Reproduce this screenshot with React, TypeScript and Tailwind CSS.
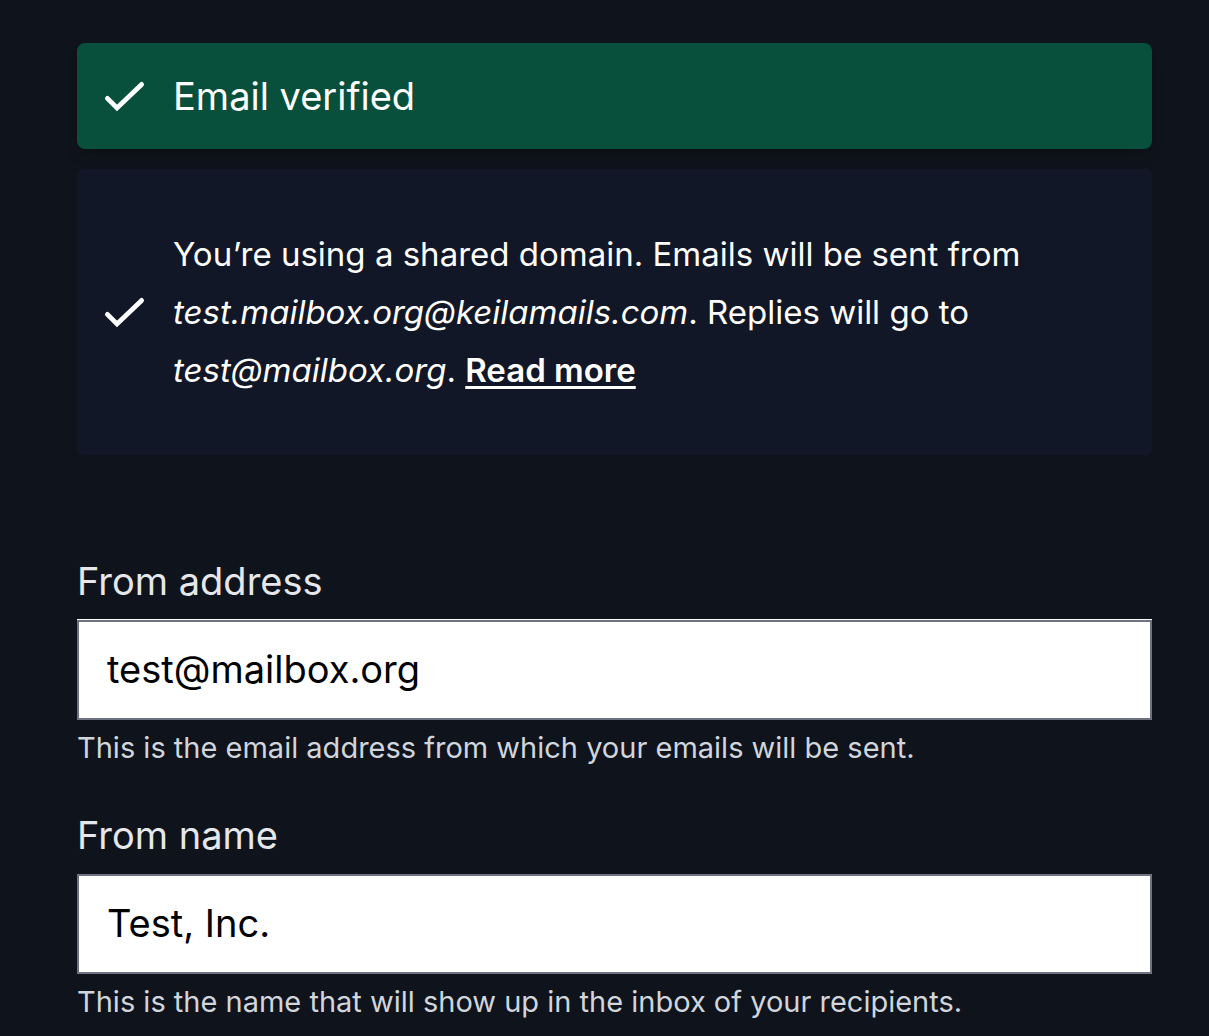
import type { ReactNode } from "react";

function CheckIcon() {
  return (
    <svg
      viewBox="0 0 48 48"
      fill="none"
      stroke="currentColor"
      strokeWidth="4.8"
      strokeLinecap="round"
      className="size-12 shrink-0"
      aria-hidden="true"
    >
      <path d="M6.4 26.4 16 36 40.6 12.4" />
    </svg>
  );
}

type FieldProps = {
  id: string;
  label: string;
  type: string;
  value: string;
  children: ReactNode;
};

function Field({ id, label, type, value, children }: FieldProps) {
  return (
    <div className="group flex flex-col">
      <label htmlFor={id} className="text-[38px] leading-[58px] text-gray-200">
        {label}
      </label>
      <input
        id={id}
        type={type}
        defaultValue={value}
        aria-describedby={`${id}-hint`}
        className="mt-[10px] h-[100px] w-full border-2 border-[#6f7280] bg-white px-7 pb-[2px] text-[38px] text-black group-first:shadow-[0_-1px_0_#fff]"
      />
      <p id={`${id}-hint`} className="mt-2 text-[29px] leading-10 text-gray-300">
        {children}
      </p>
    </div>
  );
}

export default function App() {
  return (
    <main className="min-h-screen bg-[#0f131b] pt-[43px] pr-[57px] pl-[77px] font-['Inter',sans-serif] text-white">
      <div className="flex items-center gap-6 rounded-lg bg-[#08503b] px-6 py-6 shadow-lg">
        <CheckIcon />
        <p className="text-[38px] leading-[58px]">Email verified</p>
      </div>
      <div className="mt-5 flex items-center gap-6 rounded-md bg-[#111726] px-6 py-14">
        <CheckIcon />
        <p className="text-[33px] leading-[58px]">
          You’re using a shared domain. Emails will be sent from <em>test.mailbox.org@keilamails.com</em>. Replies will
          go to <em>test@mailbox.org</em>.{" "}
          <a href="#read-more" className="font-semibold underline decoration-3 underline-offset-4">
            Read more
          </a>
        </p>
      </div>
      <form className="mt-[97px] flex flex-col gap-[38px]">
        <Field id="from-address" label="From address" type="email" value="test@mailbox.org">
          This is the email address from which your emails will be sent.
        </Field>
        <Field id="from-name" label="From name" type="text" value="Test, Inc.">
          This is the name that will show up in the inbox of your recipients.
        </Field>
      </form>
    </main>
  );
}
